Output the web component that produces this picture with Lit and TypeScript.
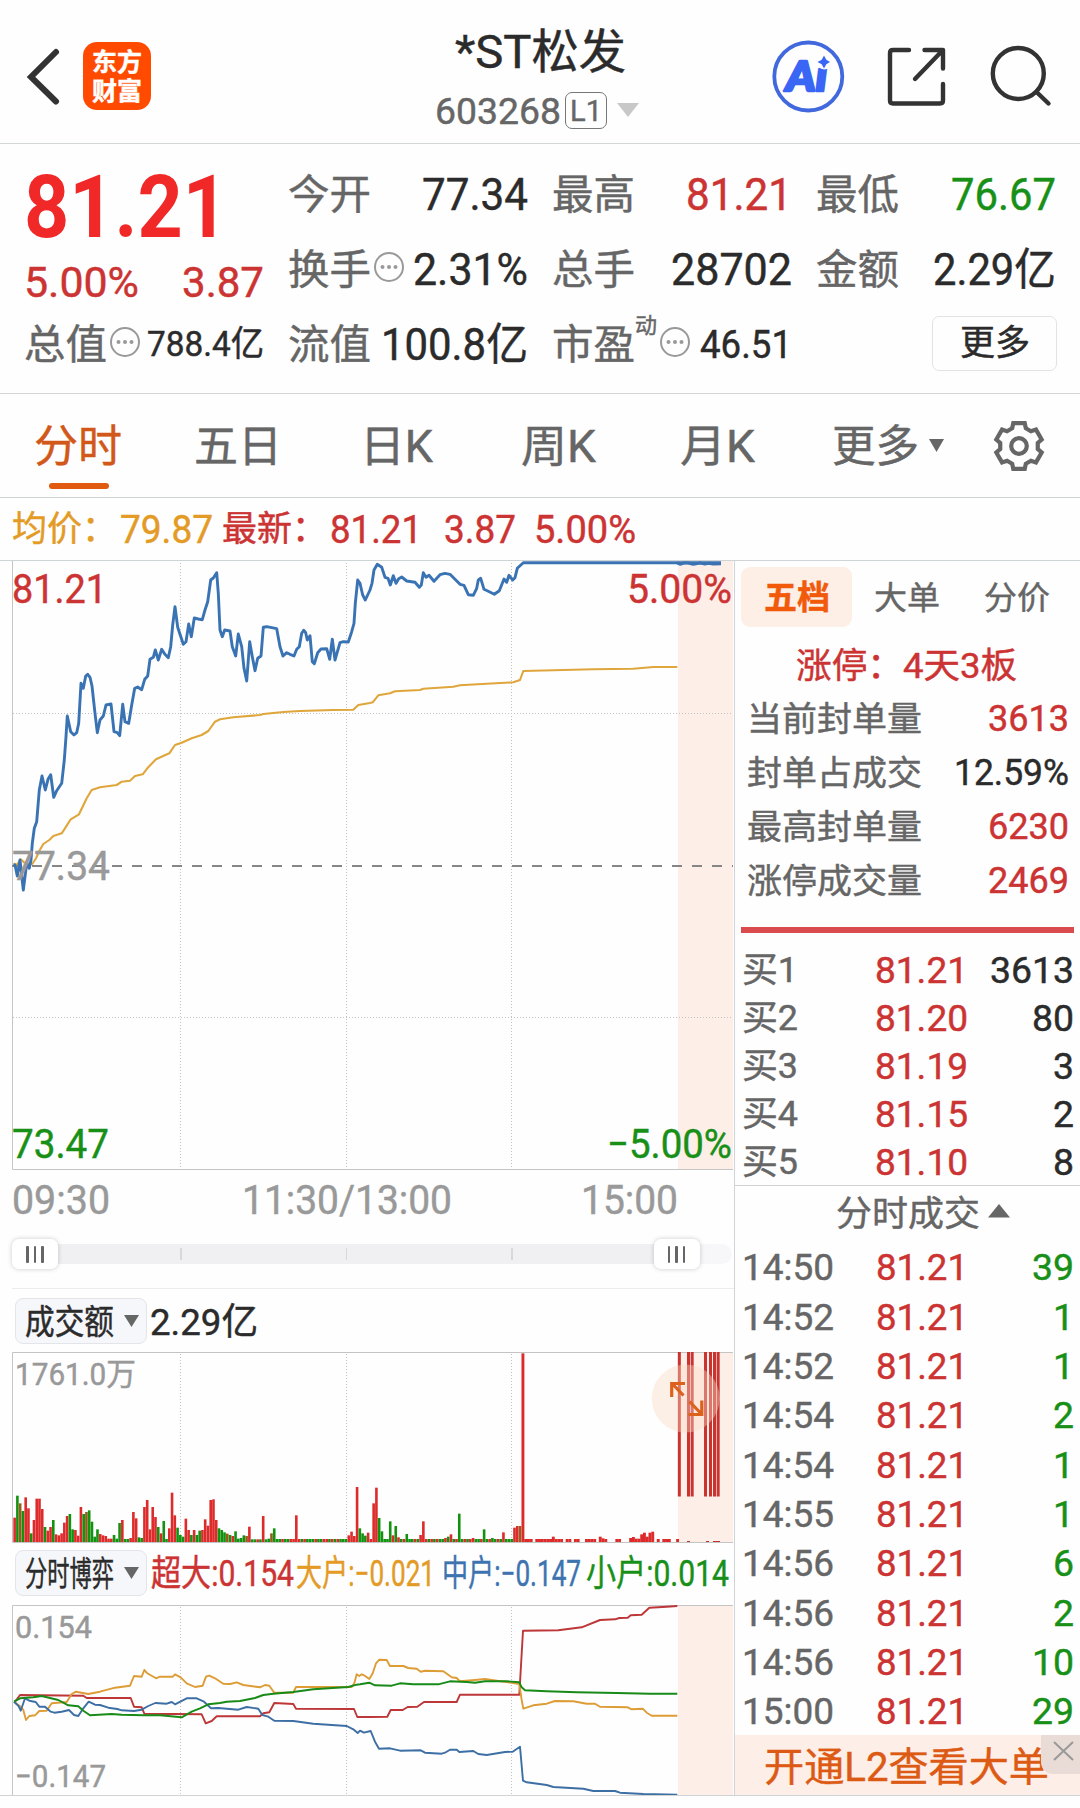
import { LitElement, html, svg, css } from "lit";
import { customElement } from "lit/decorators.js";

/** One line of text fitted to an exact advance width, capitals centred vertically. */
const fit = (s: string, size: number, w: number, cls = "") => {
  const h = Math.round(size * 1.15);
  return html`<svg class="fit ${cls}" width=${w} height=${h} viewBox="0 0 ${w} ${h}">
    <text x="0" y=${h / 2 + size * 0.357} font-size=${size} textLength=${w} lengthAdjust="spacingAndGlyphs">${s}</text>
  </svg>`;
};

/** Text inside a chart: left edge x, vertical centre cy. */
const mark = (s: string, x: number, cy: number, size: number, w: number, cls: string) =>
  svg`<text class=${cls} x=${x} y=${cy + size * 0.357} font-size=${size} textLength=${w} lengthAdjust="spacingAndGlyphs">${s}</text>`;

/** Series are stored in thirds of a pixel; oy moves them into the chart's own box. */
const line = (pts: string, oy: number) =>
  pts
    .trim()
    .split(/\s+/)
    .map((p) => {
      const [x, y] = p.split(",").map(Number);
      return `${(x / 3).toFixed(1)},${(y / 3 - oy).toFixed(1)}`;
    })
    .join(" ");

const shift = (pts: string) =>
  pts
    .trim()
    .split(/\s+/)
    .map((p) => {
      const [x, y] = p.split(",").map(Number);
      return `${x + 1080},${y}`;
    })
    .join(" ");

const PRICE =
  "40,945 45,945 52,978 60,930 70,1020 80,940 88,955 93,930 97,880 103,835 110,815 118,720 126,678 136,720 144,688 152,674 161,742 170,722 185,700 193,630 198,560 202,498 212,545 222,555 230,548 236,520 243,400 250,415 257,378 263,373 270,382 276,408 285,490 292,548 300,510 310,498 318,465 333,462 342,545 352,548 359,557 368,463 375,515 386,520 395,465 404,415 413,411 425,419 434,388 443,378 450,328 460,322 466,300 475,330 485,298 494,312 505,323 512,290 518,225 525,170 533,232 550,283 558,275 566,222 574,260 583,204 595,207 607,209 615,180 623,155 632,90 640,84 650,68 655,130 660,240 667,260 674,240 690,243 697,290 707,318 715,252 725,290 732,355 740,393 749,275 757,320 765,362 773,325 783,318 790,232 800,230 815,233 830,236 840,290 849,318 860,308 870,313 882,318 890,298 898,290 905,250 911,241 917,248 922,270 930,257 937,335 943,341 953,308 963,297 980,296 989,328 997,268 1005,330 1020,278 1030,275 1045,276 1055,245 1062,220 1066,160 1073,90 1080,100 " +
  shift(
    "8,135 16,150 30,120 36,100 42,60 52,43 65,52 75,82 84,85 91,105 100,77 108,100 116,86 125,81 140,93 165,97 178,112 184,105 190,68 198,82 207,76 222,94 240,74 255,70 270,73 285,88 300,103 312,106 325,134 340,136 350,115 355,90 362,85 372,118 385,124 403,133 418,122 432,87 440,97 447,76 458,90 465,83 472,55 480,47 490,38 1083,38",
  );
const AUCTION = shift("950,38 960,43 972,39 985,39 1000,43 1020,39 1035,42 1045,40 1060,42 1083,41");
const AVERAGE =
  "42,940 50,945 62,928 75,940 97,942 108,925 118,903 130,882 148,870 160,858 185,850 195,835 212,808 237,793 260,745 275,720 300,712 350,705 365,695 390,692 405,678 428,673 442,655 468,628 508,610 525,585 545,578 575,565 605,555 625,543 645,515 660,508 700,502 780,495 790,492 850,486 900,483 1000,480 1060,479 1075,465 1110,459 " +
  shift("38,457 55,436 90,430 105,424 180,420 190,416 280,410 300,406 380,401 460,397 480,390 490,363 700,358 820,356 880,351 952,351");

const FLOW_LARGE =
  "42,485 62,500 70,510 78,540 88,528 105,526 118,513 140,512 155,490 200,486 215,462 228,455 265,462 300,455 345,443 390,437 402,408 425,410 433,390 442,400 468,415 480,410 518,410 525,403 542,412 560,430 585,441 608,437 618,410 628,407 645,415 670,431 690,432 710,427 730,435 780,442 795,435 808,437 823,458 880,458 888,441 1055,441 1063,430 1070,403 1078,408 " +
  shift(
    "5,403 12,406 28,417 38,400 48,370 58,359 80,360 90,378 130,378 145,384 170,386 182,395 195,392 250,394 275,412 290,414 300,424 345,420 375,417 410,422 455,428 478,432 485,480 490,506 520,496 560,491 585,483 640,484 680,491 705,491 720,500 803,502 815,508 848,506 860,518 875,527 952,527",
  );
const FLOW_SUPER =
  "45,485 60,465 250,467 260,474 392,474 402,500 425,502 433,521 605,523 617,550 635,543 650,529 780,529 790,520 808,517 823,489 880,492 888,506 1062,507 1072,531 1110,531 " +
  shift(
    "82,530 92,510 128,510 143,501 172,500 192,486 290,486 300,464 478,464 489,272 595,271 665,262 720,240 765,238 778,234 803,233 812,226 845,224 868,203 920,200 952,198",
  );
const FLOW_MEDIUM =
  "42,485 55,497 62,512 75,475 88,482 107,486 118,500 135,500 152,515 163,518 185,515 207,510 222,525 235,528 250,505 266,485 285,494 300,495 325,503 352,507 365,511 402,513 425,509 445,498 466,489 500,491 515,486 525,493 560,475 590,475 612,485 633,505 655,504 715,509 740,501 775,506 787,525 805,530 823,542 880,543 940,551 1040,558 1060,568 1073,579 " +
  shift(
    "0,572 12,578 32,573 45,605 57,626 90,625 120,632 182,631 195,638 245,641 255,638 270,629 290,629 298,636 340,633 355,642 380,645 435,636 458,635 480,620 489,722 500,727 560,735 580,741 670,746 700,753 765,753 780,758 850,762 952,764",
  );
const FLOW_SMALL =
  "42,485 60,475 100,472 125,468 150,474 175,480 205,496 235,499 250,512 270,526 335,522 365,524 430,526 480,526 545,532 575,515 600,505 625,493 660,489 680,485 720,483 765,474 790,465 820,461 880,456 940,448 1045,441 1070,434 " +
  shift(
    "0,433 28,428 45,436 95,437 120,430 160,433 235,433 270,424 320,426 345,428 375,424 440,424 478,427 485,442 495,451 560,454 650,457 770,459 870,461 952,461",
  );

/** Turnover bars: slot number, bar top (thirds of a pixel), r/g for direction. */
const DENSE =
  "1193r 1127g 1150b 1173g 1132r 1165r 1240g 1200r 1136r 1136r 1167r 1221g 1232r 1221r 1200g 1243r 1246r 1240r 1208r 1188r 1182g 1228g 1230r 1247r 1161r 1182g 1176b 1171g 1205g 1250g 1228g 1242r 1246r 1248r 1256r 1256r 1245g 1256g 1209g 1200r 1257g 1257g 1254r 1176r 1195r 1252g 1254g 1161r 1140r 1228r 1161r 1191r 1221g 1240r 1203g 1257g 1225r 1118r 1186r 1223g 1245g 1250g 1196r 1230r 1245g 1230r 1245g 1232g 1230r 1198r 1217r 1140r 1138r 1200r 1225g 1230g 1237g 1241b 1245g 1248r 1234g 1256g 1254g 1246g 1248b 1220r 1258g 1258g 1258r 1258g 1188r 1258g 1256g 1240b 1225g".split(
    " ",
  );
const SPARSE: Record<number, string> = {
  102: "1186r", 121: "1246r", 122: "1235r", 123: "1248r", 124: "1101r", 125: "1225g", 126: "1240g", 127: "1247g",
  128: "1238r", 130: "1150r", 131: "1103r", 132: "1194g", 133: "1234g", 136: "1204g", 137: "1246r", 138: "1218g",
  139: "1252r", 142: "1242g", 147: "1245r", 148: "1204r", 156: "1254r", 157: "1250g", 158: "1243r", 161: "1181g",
  166: "1254r", 170: "1228g", 173: "1254g", 177: "1237r", 181: "1223r", 182: "1218r", 183: "1218b", 184: "700r",
  185: "1257r", 186: "1257r", 187: "1257r", 189: "1257r", 190: "1257r", 191: "1257r", 192: "1257r", 193: "1257r",
  194: "1257r", 195: "1250r", 196: "1257r", 197: "1257r", 198: "1257r", 200: "1257r", 201: "1257r", 203: "1257r",
  204: "1257r", 207: "1257r", 208: "1257r", 209: "1257r", 210: "1257r", 212: "1250r", 213: "1255r", 214: "1257r",
  218: "1257r", 219: "1257r", 223: "1254r", 224: "1251r", 225: "1256r", 226: "1256r", 227: "1243r", 228: "1238r",
  229: "1250r", 230: "1238r", 231: "1235r", 233: "1257r", 235: "1257r", 236: "1257r", 237: "1257r", 240: "1257r",
};
const IDLE = "grgggrggrrgr";
const FILL: Record<string, string> = { r: "#dd2a2a", g: "#12920f", b: "#9a5a1c" };

const bars = () => {
  const out = [];
  for (let i = 0; i <= 240; i++) {
    const v = DENSE[i] ?? SPARSE[i] ?? (i < 184 ? "1257" + IDLE[(i * 5) % 12] : "");
    if (!v) continue;
    const top = parseInt(v) / 3 - 232;
    out.push(svg`<rect x=${(40 + i * 8.285) / 3} y=${top} width=${i > 183 ? 2.9 : 2.6} height=${190 - top} fill=${FILL[v.slice(-1)]}></rect>`);
  }
  return out;
};

const gearPath = () => {
  const p: string[] = [];
  for (let k = 0; k < 6; k++)
    for (const [r, d] of [[19, -21], [23.6, -14], [23.6, 14], [19, 21]]) {
      const a = ((k * 60 + d - 90) * Math.PI) / 180;
      p.push(`${(26 + r * Math.cos(a)).toFixed(2)} ${(26 + r * Math.sin(a)).toFixed(2)}`);
    }
  return `M${p.join("L")}Z`;
};

const dots = html`<svg class="dots" width="32" height="32" viewBox="0 0 32 32">
  <circle cx="16" cy="16" r="14" fill="none" stroke="#999" stroke-width="2"></circle>
  <circle cx="9.5" cy="16" r="2" fill="#999"></circle>
  <circle cx="16" cy="16" r="2" fill="#999"></circle>
  <circle cx="22.5" cy="16" r="2" fill="#999"></circle>
</svg>`;

const down = (w: number, h: number, color: string) =>
  html`<svg class="tri" width=${w} height=${h} viewBox="0 0 10 10" preserveAspectRatio="none"><path d="M0 0H10L5 10Z" fill=${color}></path></svg>`;

const grid = (h: number) => [180.5, 346.5, 511.5].map((x) => svg`<line class="dotted" x1=${x} y1="2" x2=${x} y2=${h}></line>`);

@customElement("app-root")
export class AppRoot extends LitElement {
  static styles = css`
    :host {
      display: block;
      width: 1080px;
      height: 1808px;
      overflow: hidden;
      background: #fefefe;
      color: #2b2b2b;
      font-family: Roboto, "Noto Sans CJK SC", sans-serif;
    }
    * { box-sizing: border-box; }
    svg { display: block; flex: none; overflow: visible; }
    text { fill: currentColor; stroke: currentColor; stroke-width: 0.45px; white-space: pre; }
    .chart { overflow: hidden; }
    .k { color: #666; }
    .n { color: #2b2b2b; }
    .m { color: #999; }
    .r { color: #cc3333; }
    .g { color: #189018; }
    .o { color: #e39b26; }
    .u { color: #3d74b0; }
    .w { color: #fff; font-weight: 700; }
    .row { display: flex; align-items: center; }
    .between { justify-content: space-between; }
    .end { margin-left: auto; }

    .header { display: flex; height: 144px; border-bottom: 1px solid #d3d7d7; padding-left: 26px; }
    .back { margin: 48px 0 0; }
    .logo { width: 68px; height: 68px; margin: 42px 0 0 25px; border-radius: 14px; background: #ff4a00; display: flex; flex-direction: column; align-items: center; padding-top: 6px; }
    .name { width: 250px; margin: 22px 0 0 266px; display: flex; flex-direction: column; }
    .name .row:first-child { padding-left: 38px; height: 57px; }
    .name .row:last-child { padding-left: 18px; height: 62px; }
    .level { width: 42px; height: 37px; border: 1.5px solid #777; border-radius: 7px; margin: 0 10px 0 4px; display: flex; align-items: center; justify-content: center; }
    .tools { display: flex; padding-top: 38px; margin-left: 104px; gap: 40px; }
    .ai { fill: #3a66f5; stroke: #3a66f5; stroke-width: 2.6px; stroke-linejoin: round; font-family: Lato, Roboto, sans-serif; font-weight: 900; font-style: italic; }

    .quote { height: 250px; border-bottom: 1px solid #d3d7d7; padding: 13px 0 0 24px; display: grid; grid-template-columns: repeat(4, 240px); column-gap: 24px; }
    .big { color: #f12828; font-weight: 700; }
    .big text { stroke-width: 0; }
    .lead { display: flex; flex-direction: column; }
    .l1 { height: 98px; padding-left: 0; }
    .l2 { height: 52px; padding-left: 0; }
    .l3 { height: 74px; }
    .stats { display: grid; grid-template-rows: repeat(3, 75px); }
    .dots { margin: -5px 0 0 2px; }
    .sup { margin-bottom: 38px; }
    .more { width: 125px; height: 55px; margin: -3px -1px 0 auto; border: 1.5px solid #e2e4e4; border-radius: 7px; display: flex; align-items: center; justify-content: center; }

    .tabs { height: 104px; border-bottom: 1px solid #cfd5d6; display: flex; padding: 25px 0 0 34px; }
    .tab { position: relative; height: 72px; display: flex; align-items: flex-start; padding-top: 2px; }
    .tab.on { color: #d2581a; }
    .tab.on::after { content: ""; position: absolute; left: 15px; bottom: 2px; width: 60px; height: 6px; border-radius: 3px; background: #e05a10; }
    .t2 { margin-left: 72px; }
    .t3 { margin-left: 78px; }
    .t4 { margin-left: 88px; }
    .t5 { margin-left: 84px; }
    .t6 { margin-left: 77px; gap: 10px; }
    .t6 .tri { margin-top: 18px; }
    .gear { margin: 1px 0 0 49px; }

    .legend { height: 63px; border-bottom: 1px solid #cfd5d6; padding-left: 12px; }
    .a1 { margin-left: 3px; }
    .a2 { margin-left: 9px; }
    .a3 { margin-left: 3px; }
    .a4 { margin-left: 22px; }
    .a5 { margin-left: 18px; }

    .body { display: flex; height: 1235px; border-bottom: 1px solid #cfd3d4; overflow: hidden; }
    .left { width: 734px; }
    .right { flex: 1; border-left: 1px solid #cfd5d6; display: flex; flex-direction: column; }
    .frame { stroke: #c4c4c4; stroke-width: 1; fill: none; }
    .dotted { stroke: #c2c2c2; stroke-width: 1; stroke-dasharray: 1 2; }
    .dash { stroke: #868686; stroke-width: 1.8; stroke-dasharray: 10 10; }
    .series { fill: none; stroke-linejoin: round; }
    .times { height: 61px; padding: 0 0 2px 12px; }
    .slider { display: flex; align-items: center; height: 58px; padding: 0 2px 12px 12px; margin-bottom: 9px; position: relative; }
    .slider::after { content: ""; position: absolute; left: 12px; right: 0; bottom: 0; height: 1px; background: #ececec; }
    .track { display: flex; align-items: center; width: 720px; height: 20px; background: linear-gradient(90deg, #f0f0f3 680px, #f7f7fa 680px); border-radius: 10px; }
    .knob { width: 46px; height: 30px; border-radius: 7px; background: #fff; box-shadow: 0 0 5px #0003; display: flex; align-items: center; justify-content: center; gap: 5px; }
    .knob i { width: 2.4px; height: 17px; background: #666; border-radius: 1px; }
    .tick { width: 1.5px; height: 12px; background: #d8d8dc; }
    .k2 { margin-left: 141px; }
    .pickrow { height: 46px; padding-left: 15px; }
    .pick { width: 132px; height: 46px; border: 1px solid #e4e5e9; border-radius: 8px; background: #f6f7fb; padding-left: 9px; display: flex; align-items: center; gap: 10px; }

    .ptabs { display: flex; padding: 6px 0 0 6px; height: 66px; }
    .pt { height: 60px; display: flex; align-items: center; justify-content: center; width: 110px; }
    .pt.on { width: 111px; background: #fdeee6; border-radius: 9px; color: #f05a0a; font-weight: 700; }
    .limit { height: 76px; padding: 2px 0 0 61px; }
    .seal { height: 54px; padding: 0 11px 0 12px; }
    .seals { margin-top: -12px; }
    .rule { height: 6px; background: #da4b4e; margin: 20px 6px 12px; }
    .bid { height: 48px; padding: 0 6px 0 7px; }
    .px { margin-left: 77px; }
    .bid > svg { margin-top: 2px; }
    .ttl { height: 57px; border-top: 1px solid #cfd3d4; padding-left: 101px; gap: 8px; }
    .up { margin-bottom: 7px; }
    .trade { height: 49.35px; padding: 0 6px 0 7px; }
    .trade .px { margin-left: 42px; }
    .promo { position: relative; flex: 1; background: #fdefe8; padding: 3px 0 0 29px; color: #dc5a14; }
    .close { position: absolute; right: 0; top: 0; width: 39px; height: 39px; background: #e9dcd7; border-bottom-left-radius: 12px; padding: 6px 0 0 12px; }
  `;

  private stat(label: string, val: unknown, extra: unknown = "") {
    return html`<div class="row">${fit(label, 41, 83, "k")}${extra}<span class="end">${val}</span></div>`;
  }

  private knob() {
    return html`<div class="knob"><i></i><i></i><i></i></div>`;
  }

  render() {
    return html`
      <header class="header">
        <svg class="back" width="32" height="58" viewBox="0 0 32 58"><path d="M30 4L5 29L30 53.500" fill="none" stroke="#333" stroke-width="6" stroke-linecap="round"></path></svg>
        <div class="logo">${fit("东方", 25, 50, "w")}${fit("财富", 25, 50, "w")}</div>
        <div class="name">
          <div class="row">${fit("*ST松发", 47, 171, "n")}</div>
          <div class="row">${fit("603268", 37.5, 126, "k")}<span class="level">${fit("L1", 29, 32, "k")}</span>${down(22, 14, "#c8c8c8")}</div>
        </div>
        <div class="tools">
          <svg width="74" height="78" viewBox="771 38 74 78">
            <circle cx="808.3" cy="76.500" r="34" fill="none" stroke="#4169dd" stroke-width="3.800"></circle>
            <text class="ai" x="786" y="90.500" font-size="41" textLength="41" lengthAdjust="spacingAndGlyphs">Ai</text>
            <circle cx="824.500" cy="61" r="8.500" fill="#fefefe"></circle>
            <path d="M824 55.500L826.300 59.700L830 62L826.300 64.300L824 68.500L821.700 64.300L817.500 62L821.700 59.700Z" fill="#3a66f5"></path>
          </svg>
          <svg width="62" height="70" viewBox="885 38 62 70" fill="none" stroke="#333" stroke-width="4.4" stroke-linecap="round" stroke-linejoin="round">
            <path d="M909 50H893Q890 50 890 53V100.500Q890 103.500 893 103.500H940Q943 103.500 943 100.500V84"></path>
            <path d="M924.500 50H943V68.500M942 51L915 79"></path>
          </svg>
          <svg width="64" height="70" viewBox="987 38 64 70" fill="none" stroke="#333" stroke-width="4.4" stroke-linecap="round">
            <circle cx="1018.300" cy="73.500" r="25.500"></circle><path d="M1036.500 92L1048.500 103.500"></path>
          </svg>
        </div>
      </header>

      <section class="quote">
        <div class="lead">
          <div class="row l1">${fit("81.21", 87, 204, "big")}</div>
          <div class="row l2 between">${fit("5.00%", 43, 115, "r")}${fit("3.87", 43, 82, "r")}</div>
          <div class="row l3">${fit("总值", 41, 83, "k")}${dots}<span class="end">${fit("788.4亿", 35, 117, "n")}</span></div>
        </div>
        <div class="stats">
          ${this.stat("今开", fit("77.34", 44, 106, "n"))}
          ${this.stat("换手", fit("2.31%", 44, 115, "n"), dots)}
          ${this.stat("流值", fit("100.8亿", 44, 147, "n"))}
        </div>
        <div class="stats">
          ${this.stat("最高", fit("81.21", 44, 106, "r"))}
          ${this.stat("总手", fit("28702", 44, 121, "n"))}
          ${this.stat("市盈", fit("46.51", 39, 92, "n"), html`<span class="sup">${fit("动", 22, 22, "k")}</span>${dots}`)}
        </div>
        <div class="stats">
          ${this.stat("最低", fit("76.67", 44, 105, "g"))}
          ${this.stat("金额", fit("2.29亿", 44, 123, "n"))}
          <div class="row"><div class="more">${fit("更多", 35, 70, "n")}</div></div>
        </div>
      </section>

      <nav class="tabs">
        <div class="tab on">${fit("分时", 44, 88)}</div>
        <div class="tab t2">${fit("五日", 44, 88, "k")}</div>
        <div class="tab t3">${fit("日K", 44, 73, "k")}</div>
        <div class="tab t4">${fit("周K", 44, 75, "k")}</div>
        <div class="tab t5">${fit("月K", 44, 75, "k")}</div>
        <div class="tab t6">${fit("更多", 44, 87, "k")}${down(15, 13, "#666")}</div>
        <svg class="gear" width="52" height="52" viewBox="0 0 52 52" fill="none" stroke="#666" stroke-width="4.200">
          <path d=${gearPath()}></path><circle cx="26" cy="26" r="7.800"></circle>
        </svg>
      </nav>

      <div class="row legend">
        ${fit("均价：", 35, 105, "o")}<span class="a1">${fit("79.87", 38, 93, "o")}</span>
        <span class="a2">${fit("最新：", 35, 105, "r")}</span><span class="a3">${fit("81.21", 38, 92, "r")}</span>
        <span class="a4">${fit("3.87", 38, 72, "r")}</span><span class="a5">${fit("5.00%", 38, 102, "r")}</span>
      </div>

      <div class="body">
        <div class="left">
          <svg class="chart" width="734" height="609" viewBox="0 0 734 609">
            <rect x="678" y="0" width="55" height="608" fill="#fdeee8"></rect>
            ${grid(608)}
            <line class="dotted" x1="13" y1="152.500" x2="733" y2="152.500"></line>
            <line class="dotted" x1="13" y1="456.500" x2="733" y2="456.500"></line>
            <path class="frame" d="M12.500 0V608.500H733"></path>
            <line class="dash" x1="12" y1="305" x2="733" y2="305"></line>
            <polyline class="series" points=${line(AVERAGE, 11)} stroke="#dfa63c" stroke-width="2.100"></polyline>
            <polyline class="series" points=${line(PRICE, 11)} stroke="#3a73b3" stroke-width="2.900"></polyline>
            <polyline class="series" points=${line(AUCTION, 11)} stroke="#3a73b3" stroke-width="2.900"></polyline>
            ${mark("81.21", 12, 27.5, 41, 95, "r")}
            ${mark("5.00%", 627, 27.5, 41, 105, "r")}
            ${mark("77.34", 12, 304.5, 41, 98, "m")}
            ${mark("73.47", 12, 582.5, 41, 97, "g")}
            ${mark("−5.00%", 607, 582.5, 41, 125, "g")}
          </svg>
          <div class="row times">
            ${fit("09:30", 40, 98, "m")}
            <svg width="132" height="1"></svg>
            ${fit("11:30/13:00", 40, 210, "m")}
            <svg width="129" height="1"></svg>
            ${fit("15:00", 40, 97, "m")}
          </div>
          <div class="slider">
            <div class="track">
              ${this.knob()}
              <svg width="122" height="1"></svg><div class="tick"></div>
              <svg width="164" height="1"></svg><div class="tick"></div>
              <svg width="164" height="1"></svg><div class="tick"></div>
              <span class="k2">${this.knob()}</span>
            </div>
          </div>
          <div class="row pickrow">
            <div class="pick">${fit("成交额", 34, 89, "n")}${down(15, 12, "#666")}</div>
            <svg width="3" height="1"></svg>${fit("2.29亿", 37, 108, "n")}
          </div>
          <svg class="chart" width="734" height="206" viewBox="0 0 734 206">
            <g transform="translate(0 8)">
              <rect x="678" y="0" width="55" height="190" fill="#fdeee8"></rect>
              ${grid(189)}
              <path class="frame" d="M733 .5H12.500V190.500H733"></path>
              ${bars()}
              ${[953.5, 981, 992, 1032, 1047, 1059, 1070].map(
                (x) => svg`<rect x=${360 + x / 3} y="0" width="3" height="144.500" fill="#c93330"></rect>`,
              )}
              <path d="M687 189.500h3M706 189.500h3M713 189.500h7" stroke="#b33" stroke-width="1"></path>
              <circle cx="685.700" cy="46.500" r="34" fill="#fbd9c4" fill-opacity="0.400"></circle>
              <path d="M685 31.500H671.700V45M673 32.500L683.500 43.500M688.500 62.500H701.800V48.500M700.500 61L689.500 49.500" fill="none" stroke="#dc611c" stroke-width="3.200"></path>
              ${mark("1761.0万", 15, 21.5, 31, 121, "m")}
            </g>
          </svg>
          <div class="row pickrow">
            <div class="pick">${fit("分时博弈", 34, 89, "n")}${down(15, 12, "#666")}</div>
            <svg width="4" height="1"></svg>${fit("超大:0.154", 36, 143, "r")}
            <svg width="2" height="1"></svg>${fit("大户:−0.021", 36, 139, "o")}
            <svg width="7" height="1"></svg>${fit("中户:−0.147", 36, 139, "u")}
            <svg width="5" height="1"></svg>${fit("小户:0.014", 36, 143, "g")}
          </div>
          <svg class="chart" width="734" height="199" viewBox="0 0 734 199">
            <g transform="translate(0 9)">
              <rect x="678" y="0" width="55" height="191" fill="#fdeee8"></rect>
              ${grid(190)}
              <path class="frame" d="M733 .5H12.500V192"></path>
              <polyline class="series" points=${line(FLOW_SUPER, 65)} stroke="#bd3638" stroke-width="1.900"></polyline>
              <polyline class="series" points=${line(FLOW_LARGE, 65)} stroke="#dd9c35" stroke-width="1.900"></polyline>
              <polyline class="series" points=${line(FLOW_MEDIUM, 65)} stroke="#3d6fa5" stroke-width="1.900"></polyline>
              <polyline class="series" points=${line(FLOW_SMALL, 65)} stroke="#178a17" stroke-width="1.900"></polyline>
              ${mark("0.154", 15, 22, 31, 77, "m")}
              ${mark("−0.147", 15, 170.5, 31, 91, "m")}
            </g>
          </svg>
        </div>

        <aside class="right">
          <div class="ptabs">
            <div class="pt on">${fit("五档", 33, 66)}</div>
            <div class="pt">${fit("大单", 32, 66, "k")}</div>
            <div class="pt">${fit("分价", 32, 66, "k")}</div>
          </div>
          <div class="row limit">${fit("涨停：", 35, 107, "r")}${fit("4天3板", 35, 114, "r")}</div>
          <div class="seals">
            ${[
              ["当前封单量", "3613", 81, "r"],
              ["封单占成交", "12.59%", 115, "n"],
              ["最高封单量", "6230", 81, "r"],
              ["涨停成交量", "2469", 81, "r"],
            ].map(
              ([l, v, w, c]) => html`<div class="row between seal">${fit(l as string, 34, 175, "k")}${fit(v as string, 36, w as number, c as string)}</div>`,
            )}
          </div>
          <div class="rule"></div>
          ${[
            ["买1", "81.21", "3613", 84],
            ["买2", "81.20", "80", 42],
            ["买3", "81.19", "3", 21],
            ["买4", "81.15", "2", 21],
            ["买5", "81.10", "8", 21],
          ].map(
            ([l, p, v, w]) => html`<div class="row bid">
              ${fit(l as string, 35, 56, "k")}<span class="px">${fit(p as string, 37, 93, "r")}</span><span class="end">${fit(v as string, 37, w as number, "n")}</span>
            </div>`,
          )}
          <div class="row ttl">
            ${fit("分时成交", 35, 144, "k")}
            <svg class="up" width="22" height="14" viewBox="0 0 22 14"><path d="M0 13.500L11 0L22 13.500Z" fill="#666"></path></svg>
          </div>
          ${[
            ["14:50", "39"],
            ["14:52", "1"],
            ["14:52", "1"],
            ["14:54", "2"],
            ["14:54", "1"],
            ["14:55", "1"],
            ["14:56", "6"],
            ["14:56", "2"],
            ["14:56", "10"],
            ["15:00", "29"],
          ].map(
            ([t, v]) => html`<div class="row trade">
              ${fit(t, 37, 92, "k")}<span class="px">${fit("81.21", 37, 92, "r")}</span><span class="end">${fit(v, 37, v.length * 21, "g")}</span>
            </div>`,
          )}
          <div class="row promo">
            ${fit("开通L2查看大单", 40, 285)}
            <div class="close"><svg width="21" height="20" viewBox="0 0 21 20"><path d="M1 1L20 19M20 1L1 19" stroke="#999" stroke-width="2"></path></svg></div>
          </div>
        </aside>
      </div>
    `;
  }
}
